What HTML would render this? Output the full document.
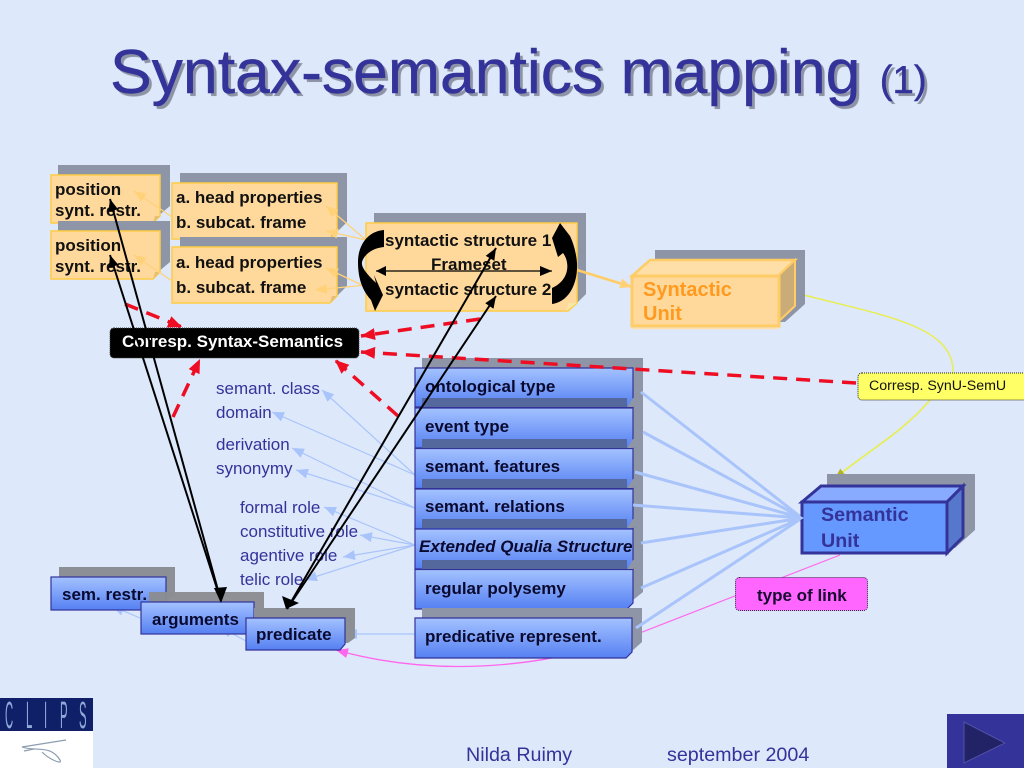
<!DOCTYPE html>
<html><head><meta charset="utf-8"><title>Syntax-semantics mapping</title>
<style>
html,body{margin:0;padding:0;background:#dde8fb;width:1024px;height:768px;overflow:hidden}
svg{position:absolute;left:0;top:0;filter:blur(.3px)}
text{font-family:"Liberation Sans",sans-serif}
.b{font-weight:bold;font-size:17px;fill:#0a0a30}
.o{font-weight:bold;font-size:17px;fill:#111}
.l{font-size:17px;fill:#333399}
#t{position:absolute;left:110px;top:36px;font:62.5px/72px "Liberation Sans",sans-serif;color:#333399;-webkit-text-stroke:.4px #333399;text-shadow:3px 3px .5px #8d93a5;white-space:nowrap}
#t span{font-size:38.5px;margin-left:2px}
</style></head><body>
<svg width="1024" height="768" viewBox="0 0 1024 768">
<defs>
<linearGradient id="g" x1="0" y1="0" x2="0" y2="1"><stop offset="0" stop-color="#a4c2ff"/><stop offset="1" stop-color="#5580f2"/></linearGradient>
<marker id="mO" markerUnits="userSpaceOnUse" markerWidth="14" markerHeight="12" refX="12" refY="6" orient="auto"><path d="M0 1L12 6L0 11z" fill="#ffd27a"/></marker>
<marker id="mB" markerUnits="userSpaceOnUse" markerWidth="14" markerHeight="12" refX="12" refY="6" orient="auto"><path d="M0 1L12 6L0 11z" fill="#a9c4fb"/></marker>
<marker id="mR" markerUnits="userSpaceOnUse" markerWidth="16" markerHeight="14" refX="14" refY="7" orient="auto"><path d="M0 1L14 7L0 13z" fill="#ee0d22"/></marker>
<marker id="mK" markerUnits="userSpaceOnUse" markerWidth="14" markerHeight="12" refX="12" refY="6" orient="auto"><path d="M0 1L12 6L0 11z" fill="#000"/></marker>
<marker id="mP" markerUnits="userSpaceOnUse" markerWidth="14" markerHeight="12" refX="12" refY="6" orient="auto"><path d="M0 1L12 6L0 11z" fill="#ff66ee"/></marker>
<marker id="mY" markerUnits="userSpaceOnUse" markerWidth="12" markerHeight="10" refX="10" refY="5" orient="auto"><path d="M0 1L10 5L0 9z" fill="#b3b32a"/></marker>
</defs>

<!-- semantic links -->
<g stroke="#a9c4fb" stroke-width="1.2" fill="none" marker-end="url(#mB)">
<path d="M415 475L322 390"/><path d="M415 475L272 412"/><path d="M415 508L292 448"/><path d="M415 508L296 470"/>
<path d="M415 545L324 507"/><path d="M415 545L360 535"/><path d="M415 545L343 557"/><path d="M415 545L305 580"/>
<path d="M415 634L345 634"/><path d="M246 641L220 627"/><path d="M140 618L112 606"/>
</g>

<!-- yellow & pink thin lines behind boxes -->
<path d="M800 294C880 315 955 325 953 373" fill="none" stroke="#e8ee50" stroke-width="1.5"/>
<path d="M930 400C905 430 870 450 835 478" fill="none" stroke="#e8ee50" stroke-width="1.7" marker-end="url(#mY)"/>
<path d="M632 636L840 555" fill="none" stroke="#ff66ee" stroke-width="1.2"/>
<path d="M633 634C570 662 450 682 336 650" fill="none" stroke="#ff66ee" stroke-width="1.3" marker-end="url(#mP)"/>

<!-- position boxes -->
<path d="M58 165H170V206L158 216H58z" fill="#8d95a6"/>
<path d="M51 175H160V216L153 223H51z" fill="#ffd99c" stroke="#ffcc44" stroke-width="1.5"/>
<path d="M153 223L155 216H160z" fill="#e8bf72"/>
<path d="M58 221H170V262L158 272H58z" fill="#8d95a6"/>
<path d="M51 231H160V272L153 279H51z" fill="#ffd99c" stroke="#ffcc44" stroke-width="1.5"/>
<path d="M153 279L155 272H160z" fill="#e8bf72"/>
<!-- head boxes -->
<path d="M180 173H347V222L337 232H180z" fill="#8d95a6"/>
<path d="M172 183H337V232L330 239H172z" fill="#ffd99c" stroke="#ffcc44" stroke-width="1.5"/>
<path d="M330 239L332 232H337z" fill="#e8bf72"/>
<path d="M180 237H347V286L337 296H180z" fill="#8d95a6"/>
<path d="M172 247H337V296L330 303H172z" fill="#ffd99c" stroke="#ffcc44" stroke-width="1.5"/>
<path d="M330 303L332 296H337z" fill="#e8bf72"/>
<!-- syntactic structure -->
<path d="M374 213H586V294L576 304H374z" fill="#8d95a6"/>
<path d="M366 223H577V303L568 311H366z" fill="#ffd99c" stroke="#ffcc44" stroke-width="1.5"/>
<path d="M566 311L569 303H577z" fill="#f5e7a8"/>
<!-- syntactic unit -->
<path d="M655 250H805V304L785 322H655z" fill="#8d95a6"/>
<path d="M632 276L650 260H795L778 276z" fill="#ffdfa8" stroke="#ffcc66" stroke-width="2.5"/>
<path d="M778 276L795 260V306L778 322z" fill="#c9ac78" stroke="#ffcc66" stroke-width="2"/>
<path d="M632 276H779V326H632z" fill="#ffd99c" stroke="#ffcc66" stroke-width="3"/>
<path d="M632 328.500H778" stroke="#ffe0ad" stroke-width="1.500"/>

<!-- orange links -->
<g stroke="#ffd27a" stroke-width="1.3" fill="none" marker-end="url(#mO)">
<path d="M366 240L326 206"/><path d="M366 240L326 231"/><path d="M366 287L326 268"/><path d="M366 285L315 290"/>
<path d="M172 217L134 191"/><path d="M172 281L134 255"/>
</g>
<path d="M577 270L632 287" stroke="#ffcc66" stroke-width="2.500" fill="none" marker-end="url(#mO)"/>

<!-- blue stack -->
<path d="M422 358H643V592L633 600H422z" fill="#8d95a6"/>
<g fill="url(#g)" stroke="#333399" stroke-width="1.2">
<path d="M415 368H633V407H415z"/><path d="M415 408H633V448H415z"/><path d="M415 448.500H633V488.500H415z"/><path d="M415 489H633V529H415z"/><path d="M415 529H633V569H415z"/><path d="M415 569.500H633V603L627 609H415z"/>
</g>
<g fill="#55689e">
<rect x="422" y="398" width="205" height="9"/><rect x="422" y="439" width="205" height="9"/><rect x="422" y="479" width="205" height="9"/><rect x="422" y="519" width="205" height="9"/><rect x="422" y="560" width="205" height="9"/>
</g>
<g fill="#8d95a6"><path d="M627 407L633 398H643L633 407z"/><path d="M627 448L633 439H643L633 448z"/><path d="M627 488L633 479H643L633 488z"/><path d="M627 528L633 519H643L633 528z"/><path d="M627 569L633 560H643L633 569z"/></g>
<path d="M422 608H642V642L632 651H422z" fill="#8d95a6"/>
<path d="M415 618H632V652L626 658H415z" fill="url(#g)" stroke="#333399" stroke-width="1.2"/>

<!-- right fan -->
<g stroke="#a9c4fb" stroke-width="3" fill="none">
<path d="M641 392L802 518"/><path d="M643 432L802 518"/><path d="M635 472L802 518"/><path d="M633 505L802 518"/><path d="M641 543L802 518"/><path d="M641 588L802 518"/><path d="M636 628L802 518"/>
</g>

<!-- semantic unit -->
<path d="M827 474H975V530L955 548H827z" fill="#8d95a6"/>
<path d="M802 502L821 486H963L947 502z" fill="#88aaff" stroke="#333399" stroke-width="3"/>
<path d="M947 502L963 486V537L947 553z" fill="#5577cc" stroke="#333399" stroke-width="3"/>
<path d="M802 502H947V553H802z" fill="#6699ff" stroke="#333399" stroke-width="3"/>
<path d="M788 509L804 518L788 527z" fill="#a9c4fb"/>

<!-- small boxes -->
<path d="M59 567H175V595L168 600H59z" fill="#8d8f96"/>
<rect x="51" y="577" width="115" height="33" fill="url(#g)" stroke="#333399" stroke-width="1.2"/>
<path d="M149 592H264V626L257 632H149z" fill="#8a8c92" fill-opacity=".96"/>
<rect x="141" y="602" width="113" height="32" fill="url(#g)" stroke="#333399" stroke-width="1.2"/>
<path d="M254 608H355V638L348 643H254z" fill="#8d8f96"/>
<path d="M246 618H345V644L340 650H246z" fill="url(#g)" stroke="#333399" stroke-width="1.2"/>

<!-- labels -->
<rect x="110" y="328" width="249" height="30" rx="4" fill="#000" stroke="#444" stroke-width="1" stroke-dasharray="1 1"/>
<rect x="858" y="373" width="180" height="27" rx="4" fill="#ffff66" stroke="#222" stroke-width="1" stroke-dasharray="1 1"/>
<rect x="735.500" y="577.500" width="132" height="33" rx="4" fill="#ff66ff" stroke="#332244" stroke-width="1" stroke-dasharray="1 1"/>

<!-- red dashed -->
<g stroke="#ee0d22" stroke-width="3.500" fill="none" stroke-dasharray="14 9">
<path d="M480 319L361 336" marker-end="url(#mR)"/>
<path d="M856 383L361 352" marker-end="url(#mR)"/>
<path d="M125 304L182 327" marker-end="url(#mR)"/>
<path d="M173 417L200 359" marker-end="url(#mR)"/>
<path d="M398 416L335 360" marker-end="url(#mR)"/>
</g>

<!-- texts -->
<text class="o" x="55" y="195">position</text><text class="o" x="55" y="216">synt. restr.</text>
<text class="o" x="55" y="251">position</text><text class="o" x="55" y="272">synt. restr.</text>
<text class="o" x="176" y="203">a. head properties</text><text class="o" x="176" y="228">b. subcat. frame</text>
<text class="o" x="176" y="268">a. head properties</text><text class="o" x="176" y="293">b. subcat. frame</text>
<text class="o" x="385" y="246">syntactic structure 1</text>
<text class="o" x="431" y="270">Frameset</text>
<text class="o" x="385" y="295">syntactic structure 2</text>
<text x="643" y="296" font-size="20" font-weight="bold" fill="#ff9a1f">Syntactic</text>
<text x="643" y="320" font-size="20" font-weight="bold" fill="#ff9a1f">Unit</text>
<text x="821" y="521" font-size="19.700" font-weight="bold" fill="#333399">Semantic</text>
<text x="821" y="547" font-size="19.700" font-weight="bold" fill="#333399">Unit</text>
<text x="122" y="347" font-size="17" font-weight="bold" fill="#fff">Corresp. Syntax-Semantics</text>
<text x="869" y="390" font-size="14.200" fill="#111">Corresp. SynU-SemU</text>
<text x="757" y="601" font-size="17" font-weight="bold" fill="#180a30">type of link</text>
<text class="b" x="425" y="392">ontological type</text>
<text class="b" x="425" y="432">event type</text>
<text class="b" x="425" y="472">semant. features</text>
<text class="b" x="425" y="512">semant. relations</text>
<text class="b" x="419" y="552" font-style="italic">Extended Qualia Structure</text>
<text class="b" x="425" y="594">regular polysemy</text>
<text class="b" x="425" y="642">predicative represent.</text>
<text class="b" x="62" y="600">sem. restr.</text>
<text class="b" x="152" y="625">arguments</text>
<text class="b" x="256" y="640">predicate</text>
<text class="l" x="216" y="394">semant. class</text>
<text class="l" x="216" y="418">domain</text>
<text class="l" x="216" y="450">derivation</text>
<text class="l" x="216" y="474">synonymy</text>
<text class="l" x="240" y="513">formal role</text>
<text class="l" x="240" y="537">constitutive role</text>
<text class="l" x="240" y="561">agentive role</text>
<text class="l" x="240" y="585">telic role</text>

<!-- frameset arrow -->
<path d="M376 271H552" stroke="#000" stroke-width="1.200" fill="none" marker-end="url(#mK)"/>
<path d="M386 266L376 271L386 276z" fill="#000"/>
<!-- curved arrows -->
<path d="M384 230C368 231 358 245 358 262C358 278 362 290 371 300L375 311L383 295L374 275L376 283C368 275 361 268 362 262C364 255 372 248 384 247Z" fill="#000"/>
<path d="M560 223L552 238L558 257L563 253C570 262 570 280 552 288V304C568 302 578 285 577 263C576 250 572 240 570 236Z" fill="#000"/>

<!-- black arrows -->
<g stroke="#000" stroke-width="2" fill="none">
<path d="M221 601L110 199" marker-end="url(#mK)"/>
<path d="M221 601L110 255" marker-end="url(#mK)"/>
<path d="M287 609L496 248" marker-end="url(#mK)"/>
<path d="M287 609L496 296" marker-end="url(#mK)"/>
</g>
<path d="M214 588L221 603L227 587z" fill="#000"/>
<path d="M282 596L286 609L299 603z" fill="#000"/>

<!-- footer -->
<text x="466" y="761" font-size="19.700" fill="#333399">Nilda Ruimy</text>
<text x="667" y="761" font-size="19.700" fill="#333399">september 2004</text>

<!-- logo -->
<rect x="0" y="698" width="93" height="33" fill="#0f1f68"/>
<rect x="0" y="731" width="93" height="37" fill="#fff"/>
<g fill="#8ea8d8" font-size="27">
<text transform="translate(5 728) scale(.42 1.4)">C</text>
<text transform="translate(26 728) scale(.42 1.4)">L</text>
<text transform="translate(44 728) scale(.42 1.4)">I</text>
<text transform="translate(60 728) scale(.42 1.4)">P</text>
<text transform="translate(79 728) scale(.42 1.4)">S</text>
</g>
<g fill="none" stroke="#8b9db0" stroke-width="1.2">
<path d="M22 747L66 740"/><path d="M22 747C35 752 50 744 60 760C63 765 50 760 42 752"/><path d="M34 749L24 751"/>
</g>
<!-- nav button -->
<rect x="947" y="714" width="77" height="54" fill="#333399"/>
<path d="M964 722L1005 743L964 763z" fill="#222266" stroke="#5050a8" stroke-width="1"/>
</svg>
<div id="t">Syntax-semantics mapping <span>(1)</span></div>
</body></html>
